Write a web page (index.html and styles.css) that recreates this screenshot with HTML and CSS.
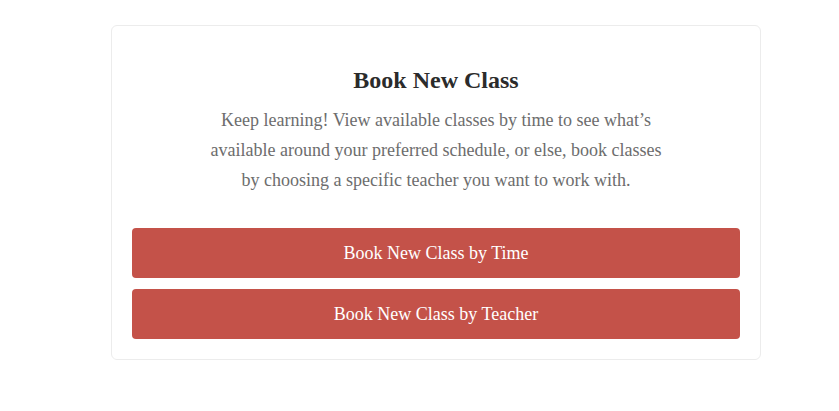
FILE: index.html
```html
<!DOCTYPE html>
<html>
<head>
<meta charset="utf-8">
<link rel="stylesheet" href="styles.css">
</head>
<body>
<div class="page">
  <section class="card">
    <h2 class="title">Book New Class</h2>
    <p class="intro">Keep learning! View available classes by time to see what’s available around your preferred schedule, or else, book classes by choosing a specific teacher you want to work with.</p>
    <div class="actions">
      <button class="btn">Book New Class by Time</button>
      <button class="btn">Book New Class by Teacher</button>
    </div>
  </section>
</div>
</body>
</html>
```

FILE: styles.css
```css
html, body {
  margin: 0;
  background: #ffffff;
  font-family: "Liberation Serif", "Times New Roman", serif;
}
.page {
  padding: 25px 0 0 111px;
}
.card {
  width: 650px;
  box-sizing: border-box;
  border: 1px solid #ececec;
  border-radius: 6px;
  padding: 20px;
  background: #fff;
}
.title {
  margin: 20px 0 0;
  font-size: 24px;
  line-height: 28px;
  font-weight: bold;
  color: #2b2b2b;
  text-align: center;
}
.intro {
  margin: 11px auto 0;
  max-width: 462px;
  font-size: 18px;
  line-height: 30px;
  color: #6d6d6d;
  text-align: center;
}
.actions {
  margin-top: 33px;
  display: flex;
  flex-direction: column;
  gap: 11px;
}
.btn {
  height: 50px;
  border: none;
  border-radius: 4px;
  background: #c45249;
  color: #ffffff;
  font-family: "Liberation Serif", "Times New Roman", serif;
  font-size: 18px;
  cursor: pointer;
}
```
